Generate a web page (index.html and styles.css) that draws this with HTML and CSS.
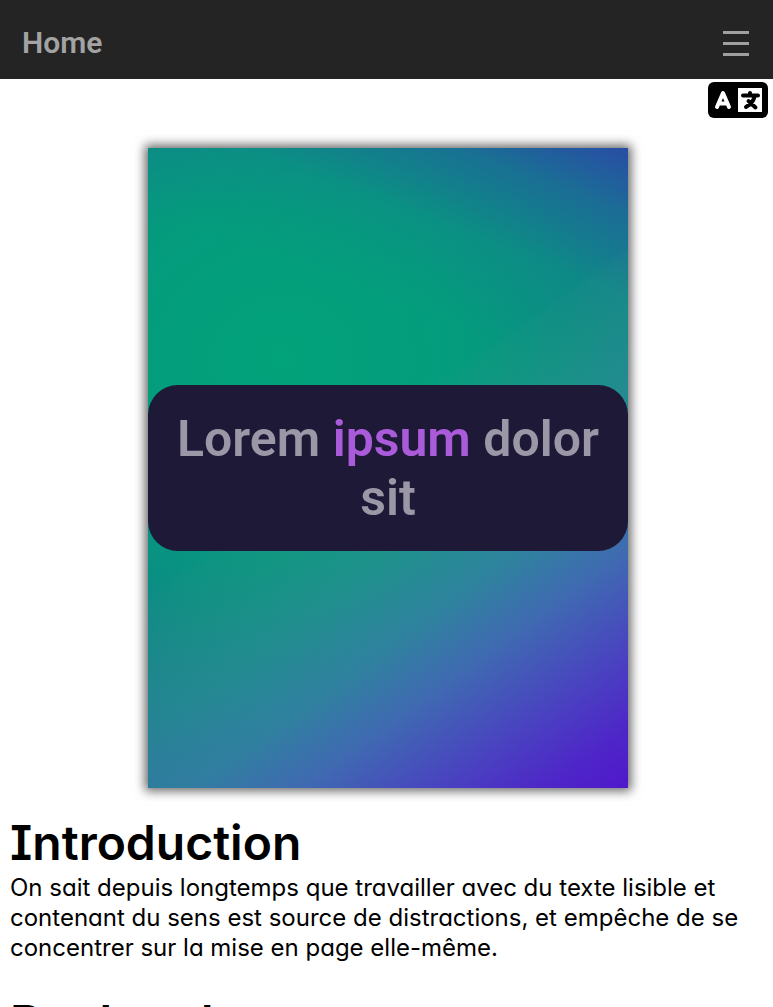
FILE: index.html
```html
<!DOCTYPE html>
<html lang="fr">
<head>
<meta charset="utf-8">
<meta name="viewport" content="width=device-width, initial-scale=1">
<title>Home</title>
<link rel="stylesheet" href="styles.css">
</head>
<body>
<header class="navbar">
  <a class="brand" href="#">Home</a>
  <button class="menu" type="button" aria-label="Menu">
    <svg width="26" height="26" viewBox="0 0 26 26" aria-hidden="true"><path d="M0 2.500h26M0 13.500h26M0 24.500h26"/></svg>
  </button>
</header>
<main>
  <div class="tools">
    <button class="translate" type="button" aria-label="Traduire">
      <svg width="60" height="36" viewBox="0 0 60 36" aria-hidden="true">
        <path class="panel" d="M30 6h24v24H30z"/>
        <path class="latin" d="M9 25l6-14 6 14M11.500 21.500h7"/>
        <path class="han" d="M35 13.500h15M42 11v2.500M46.500 14.500c-1 4.500-4 8-8.500 10.500M40.500 19l7 6.500"/>
      </svg>
    </button>
  </div>
  <div class="stage">
    <section class="hero">
      <h1 class="hero-title">Lorem <span class="accent">ipsum</span> dolor sit</h1>
    </section>
  </div>
  <article class="content">
    <h2>Introduction</h2>
    <p>On sait depuis longtemps que travailler avec du texte lisible et contenant du sens est source de distractions, et empêche de se concentrer sur la mise en page elle-même.</p>
    <h2>Backend</h2>
  </article>
</main>
</body>
</html>
```
FILE: styles.css
```css
* { box-sizing: border-box; }
html { overflow: hidden; }
body { margin: 0; height: 100vh; overflow: hidden; background: #fff; color: #000; font-family: Inter, sans-serif; }
.navbar { display: flex; align-items: center; justify-content: space-between; background: #242424; padding: 25px 24px 18px 22px; }
.brand { color: #a3a3a3; font: 600 30px/36px Roboto, sans-serif; text-decoration: none; }
.menu, .translate { display: block; border: 0; padding: 0; cursor: pointer; }
.menu { background: none; }
.menu svg, .translate svg { display: block; }
.menu path { stroke: #a0a0a0; stroke-width: 3; }
.tools { display: flex; justify-content: flex-end; padding: 3px 5px 0; }
.translate { background: #000; border-radius: 6px; }
.panel { fill: #fff; }
.latin, .han { fill: none; stroke-width: 4; stroke-linecap: round; stroke-linejoin: round; }
.latin { stroke: #fff; }
.han { stroke: #000; }
.stage { display: flex; justify-content: center; padding: 30px 0 0 3px; }
.hero {
  display: flex; align-items: center;
  width: 100%; max-width: 480px; aspect-ratio: 3 / 4;
  box-shadow: 0 0 10px 3px #666;
  background:
    linear-gradient(324deg, #5018cc 0%, #4e26c8 6%, #4943c0 14%, rgba(64, 106, 178, .98) 24%, rgba(52, 130, 162, .85) 32%, rgba(46, 144, 148, .6) 41%, rgba(46, 150, 136, .3) 49%, rgba(56, 150, 136, .1) 54%, rgba(56, 150, 136, 0) 55%),
    linear-gradient(201deg, #284ea5 0%, rgba(32, 98, 155, .65) 8%, rgba(20, 130, 140, .3) 18%, rgba(14, 135, 135, 0) 30%),
    radial-gradient(ellipse 115% 75% at 28% 33%, #02a27a 0%, #049c7d 32%, #0b8d84 54%, #167a90 75%, #284ea5 100%);
}
.hero-title { flex: 1; margin: 0; padding: 25px 24px 23px; border-radius: 30px; background: #1d1937; color: #9b97a6; text-align: center; font: 600 50px/59px Roboto, sans-serif; }
.accent { color: #aa5bda; }
.content { padding: 25px 10px 0; font-feature-settings: "cv08", "cv11"; }
.content h2 { margin: 0; font-size: 48px; font-weight: 600; line-height: 60px; }
.content p { margin: 0 0 30px; font-size: 24px; line-height: 30px; }
```
